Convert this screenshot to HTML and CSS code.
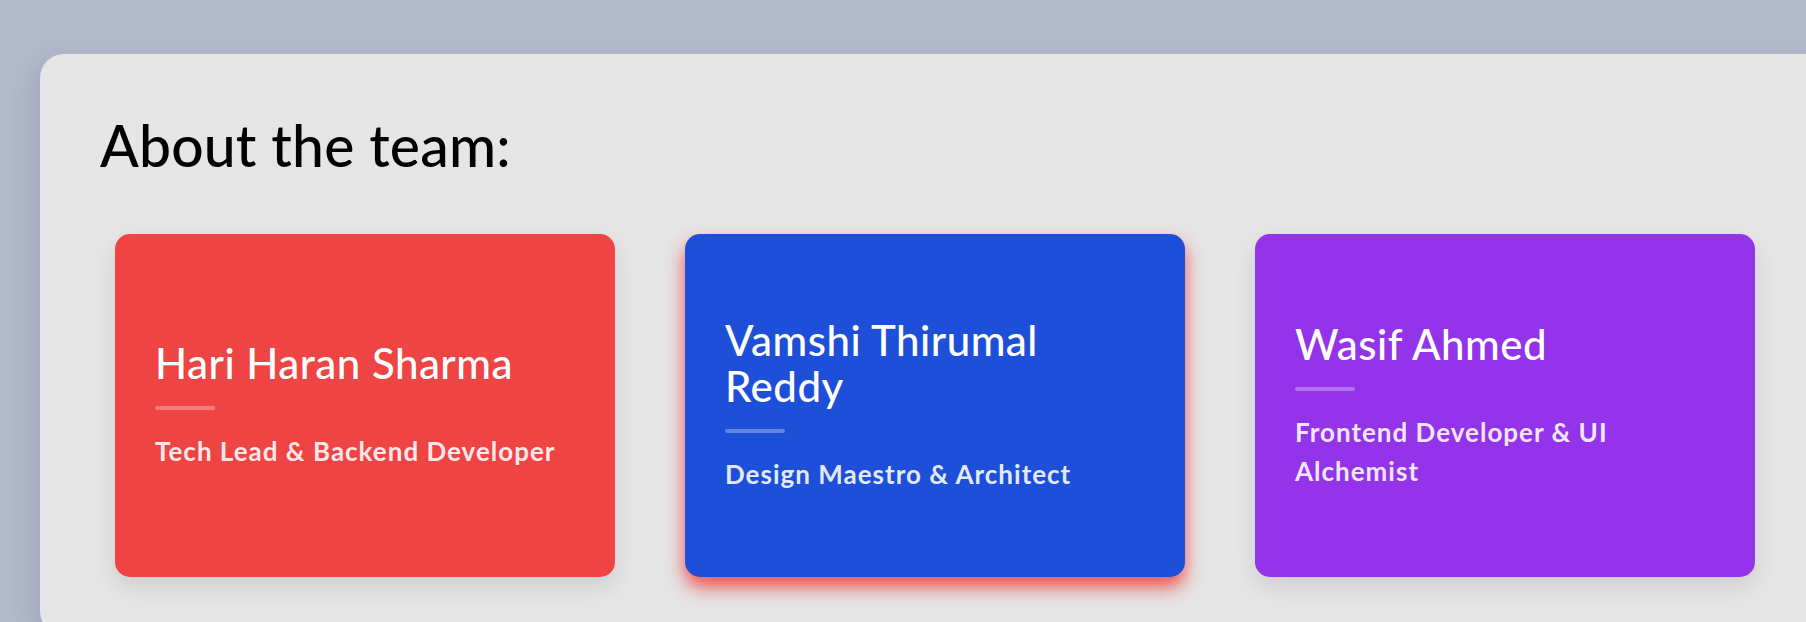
FILE: index.html
```html
<!DOCTYPE html>
<html lang="en">
<head>
<meta charset="utf-8">
<title>About the team</title>
<link rel="stylesheet" href="styles.css">
</head>
<body>
<div class="page">
  <section class="panel">
    <h1 class="title">About the team:</h1>
    <div class="cards">
      <article class="card card-red">
        <h2 class="card-name">Hari Haran Sharma</h2>
        <div class="card-rule"></div>
        <p class="card-role">Tech Lead &amp; Backend Developer</p>
      </article>
      <article class="card card-blue">
        <h2 class="card-name">Vamshi Thirumal Reddy</h2>
        <div class="card-rule"></div>
        <p class="card-role">Design Maestro &amp; Architect</p>
      </article>
      <article class="card card-purple">
        <h2 class="card-name">Wasif Ahmed</h2>
        <div class="card-rule"></div>
        <p class="card-role">Frontend Developer &amp; UI Alchemist</p>
      </article>
    </div>
  </section>
</div>
</body>
</html>
```

FILE: styles.css
```css
* { box-sizing: border-box; }

html, body {
  margin: 0;
  padding: 0;
}

body {
  background: #b3bacb;
  font-family: "Lato", "Noto Sans", sans-serif;
  overflow: hidden;
  height: 622px;
}

.page {
  padding: 54px 0 0 40px;
}

.panel {
  width: 1790px;
  height: 581px;
  background: #e5e5e5;
  border-radius: 24px;
  padding: 57px 60px 0 60px;
  box-shadow: -6px 8px 24px rgba(60, 80, 130, 0.18);
}

.title {
  margin: 0;
  font-size: 57px;
  line-height: 68px;
  font-weight: 500;
  letter-spacing: 0.2px;
  color: #000;
}

.cards {
  display: flex;
  gap: 70px;
  margin-top: 55px;
  padding: 0 15px;
}

.card {
  width: 500px;
  height: 343px;
  border-radius: 15px;
  padding: 0 40px;
  display: flex;
  flex-direction: column;
  justify-content: center;
  color: #fff;
  box-shadow: 0 10px 22px rgba(0, 0, 0, 0.1);
}

.card-red { background: #ef4444; }
.card-blue {
  background: #1e4fd8;
  box-shadow: 0 10px 18px rgba(239, 68, 68, 0.9);
}
.card-purple { background: #9333ea; }

.card-name {
  margin: 0;
  font-size: 42px;
  line-height: 46px;
  font-weight: 500;
  letter-spacing: 0.5px;
}

.card-rule {
  width: 60px;
  height: 4px;
  border-radius: 2px;
  background: rgba(255, 255, 255, 0.3);
  margin: 20px 0 22px;
}

.card-role {
  margin: 0;
  font-size: 26px;
  line-height: 39px;
  font-weight: 700;
  letter-spacing: 1px;
  color: rgba(255, 255, 255, 0.9);
}
```
